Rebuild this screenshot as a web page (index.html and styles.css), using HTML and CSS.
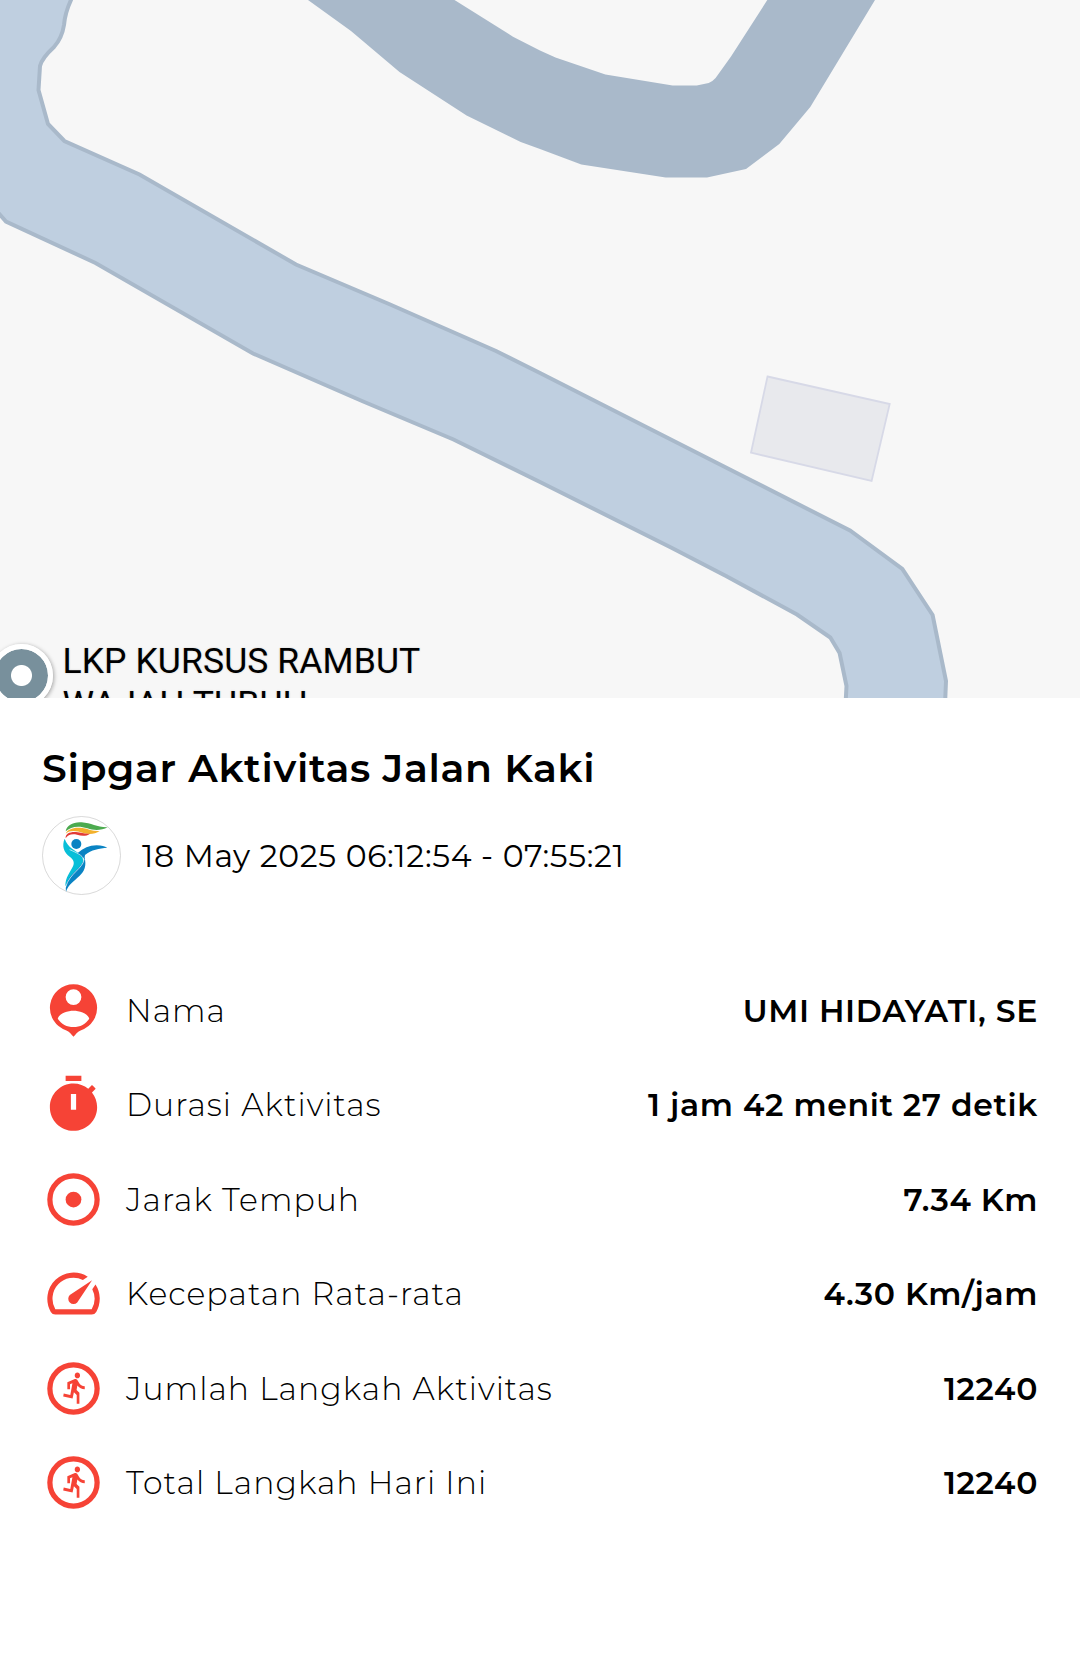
FILE: index.html
```html
<!DOCTYPE html>
<html lang="id">
<head>
  <meta charset="UTF-8" />
  <meta name="viewport" content="width=device-width, initial-scale=1.0" />
  <title>Sipgar Aktivitas Jalan Kaki</title>
  <link rel="stylesheet" href="styles.css">
</head>
<body>
  <section class="map">
    <svg class="map-canvas" viewBox="0 0 1080 698">
      <path class="road-dark" d="M308 0L351 31L399.5 72L466.6 115.5L520.7 142L540 149L581.3 164.5L665.7 177.5H707L746 169L779.3 144L810.3 107L875 0H767.3L731 56.5L715.6 78Q712 82 708.7 83L696.7 85.5H672.6L605.4 74.5L555.5 57.5L540 50.5L513 36.7L454.5 0Z" />
      <path class="road" d="M-5 -5H73L71 0Q65 13 64 25Q62 38 54 47Q42 58 40 66L38.5 90L48 124L64.4 141L139.5 174.5L296 264.5L389 304L496 351L540 373L746.6 478L850 530.5L902.3 569L932.6 615L946 681L945 705H845.5L846.5 686L839.6 653L830.3 637.5L797 614.5L726 576L671 547.5L540 482L453.5 439.5L362 401L253 353.5L95.5 263L6 221.5L-5 209Z" />
      <path class="building" d="M767.5 376.5L889.7 404L871.6 481L751 452.7Z" />
    </svg>
    <div class="pin"></div>
    <p class="place">LKP KURSUS RAMBUT<br>WAJAH TUBUH</p>
  </section>

  <main class="detail">
    <h1>Sipgar Aktivitas Jalan Kaki</h1>

    <div class="tanggal">
      <svg class="logo" viewBox="36 33 237 237">
        <circle cx="154.500" cy="151.500" r="117" fill="#fff" stroke="#c0c0c0" stroke-width="1.800" />
        <path fill="#4caa4f" d="M107 79C110 61 130 50 155 52C184 54 202 68 233 67C214 77 192 77 172 70C147 61 122 64 107 79Z" />
        <path fill="#f3b12c" d="M107 86C112 73 132 65 157 69C177 72 190 80 209 78C196 87 178 90 160 84C139 77 119 75 107 86Z" />
        <path fill="#e23b35" d="M107 100C106 86 119 80 138 81C156 82 164 88 180 86C169 94 155 94 141 89C125 85 114 89 107 100Z" />
        <circle cx="139" cy="117" r="15" fill="#0a83c3" />
        <path fill="#08bfd8" d="M104 101C95 122 101 142 119 155C131 164 134 172 129 184C120 203 106 216 106 244C116 226 132 213 147 197C160 182 166 164 150 148C134 134 113 128 104 101Z" />
        <path fill="#0a83c3" d="M142 145C161 129 177 121 200 121C215 121 224 125 232 128C208 131 184 133 165 150L163 163Z" />
        <path fill="#0a83c3" d="M163 156C171 182 163 199 149 212C131 230 115 238 108 260C105 234 117 217 133 201C147 188 160 177 163 156Z" />
        <path fill="none" stroke="#fff" stroke-width="2" d="M119 134C140 143 157 151 162 163C160 190 119 204 107 246" />
      </svg>
      <span>18 May 2025 06:12:54 - 07:55:21</span>
    </div>

    <ul class="list">
      <li>
        <svg class="icon" viewBox="0 0 24 24"><path fill-rule="evenodd" d="M12 2a9 9 0 0 0-2.700 17.580C10.300 20 11.200 21 12 22c.8-1 1.700-2 2.700-2.420A9 9 0 0 0 12 2zm0 1.900a3 3 0 1 1 0 6 3 3 0 0 1 0-6zM6 15.100C6.600 13 9.800 12.100 12 12.100s5.400.9 6 3c-1.300 2-3.500 3.200-6 3.200s-4.700-1.200-6-3.200z" /></svg>
        <span class="label">Nama</span>
        <span class="value">UMI HIDAYATI, SE</span>
      </li>
      <li>
        <svg class="icon" viewBox="0 0 24 24"><path d="M15 1H9v2h6V1zm-4 13h2V8h-2v6zm8.030-6.610l1.420-1.420c-.43-.51-.9-.99-1.410-1.410l-1.420 1.420C16.070 4.740 14.120 4 12 4c-4.970 0-9 4.030-9 9s4.020 9 9 9 9-4.030 9-9c0-2.120-.74-4.070-1.970-5.610z" fill-rule="evenodd" /></svg>
        <span class="label">Durasi Aktivitas</span>
        <span class="value">1 jam 42 menit 27 detik</span>
      </li>
      <li>
        <svg class="icon" viewBox="0 0 24 24"><circle class="ring" cx="12" cy="12" r="9" /><circle cx="12" cy="12" r="3" /></svg>
        <span class="label">Jarak Tempuh</span>
        <span class="value">7.34 Km</span>
      </li>
      <li>
        <svg class="icon" viewBox="0 0 24 24"><path d="M20.380 8.570l-1.230 1.850a8 8 0 0 1-.22 7.580H5.070A8 8 0 0 1 15.580 6.850l1.850-1.230A10 10 0 0 0 3.350 19a2 2 0 0 0 1.720 1h13.850a2 2 0 0 0 1.740-1 10 10 0 0 0-.27-10.440zm-9.790 6.840a2 2 0 0 0 2.830 0l5.660-8.490-8.490 5.660a2 2 0 0 0 0 2.830z" /></svg>
        <span class="label">Kecepatan Rata-rata</span>
        <span class="value">4.30 Km/jam</span>
      </li>
      <li>
        <svg class="icon" viewBox="0 0 24 24"><circle class="ring" cx="12" cy="12" r="9" /><path transform="matrix(.51 0 0 .555 6.600 5.070)" d="M13.490 5.480c1.100 0 2-.9 2-2s-.9-2-2-2-2 .9-2 2 .9 2 2 2zm-3.600 13.900l1-4.400 2.100 2v6h2v-7.500l-2.100-2 .6-3c1.300 1.500 3.300 2.500 5.500 2.500v-2c-1.900 0-3.500-1-4.300-2.400l-1-1.600c-.4-.6-1-1-1.700-1-.3 0-.5.1-.8.1l-5.200 2.200v4.700h2v-3.400l1.800-.7-1.600 8.100-4.900-1-.4 2 7 1.400z" /></svg>
        <span class="label">Jumlah Langkah Aktivitas</span>
        <span class="value">12240</span>
      </li>
      <li>
        <svg class="icon" viewBox="0 0 24 24"><circle class="ring" cx="12" cy="12" r="9" /><path transform="matrix(.51 0 0 .555 6.600 5.070)" d="M13.490 5.480c1.100 0 2-.9 2-2s-.9-2-2-2-2 .9-2 2 .9 2 2 2zm-3.600 13.900l1-4.400 2.100 2v6h2v-7.500l-2.100-2 .6-3c1.300 1.500 3.300 2.500 5.500 2.500v-2c-1.900 0-3.500-1-4.300-2.400l-1-1.600c-.4-.6-1-1-1.700-1-.3 0-.5.1-.8.1l-5.200 2.200v4.700h2v-3.400l1.800-.7-1.600 8.100-4.900-1-.4 2 7 1.400z" /></svg>
        <span class="label">Total Langkah Hari Ini</span>
        <span class="value">12240</span>
      </li>
    </ul>
  </main>
</body>
</html>
```

FILE: styles.css
```css
* {
  margin: 0;
  padding: 0;
  box-sizing: border-box;
}

body {
  font-family: Montserrat, Inter, sans-serif;
  font-size: 31.5px;
  letter-spacing: 0.656px;
  background: #fff;
  color: #000;
}

.map {
  position: relative;
  height: 698px;
  background: #f7f7f7;
  overflow: hidden;
}

.map-canvas {
  display: block;
  width: 100%;
  height: 698px;
}

.road-dark {
  fill: #a9b9ca;
}

.road {
  fill: #bfcfe0;
  stroke: #a9b9ca;
  stroke-width: 4;
}

.building {
  fill: #e8e9ed;
  stroke: #d7d9e7;
  stroke-width: 1.8;
}

/* place marker and its label float over the map */
.pin {
  position: absolute;
  left: -10px;
  top: 644px;
  width: 63px;
  height: 63px;
  border: 5px solid #fff;
  border-radius: 50%;
  background: radial-gradient(circle, #fff 10px, #78909c 11px);
  background-origin: border-box;
  background-clip: padding-box;
  box-shadow: 1px 1px 4px rgba(0, 0, 0, 0.35);
}

.place {
  position: absolute;
  left: 62.5px;
  top: 640px;
  font-family: Roboto, sans-serif;
  font-size: 35.5px;
  line-height: 43px;
  letter-spacing: 0.1px;
  white-space: nowrap;
  text-shadow: 0 0 2px #ddd, 0 0 2px #ddd;
}

.detail {
  padding: 46px 42px 0;
}

h1 {
  font-size: 39.375px;
  font-weight: 600;
  line-height: 48px;
}

.tanggal {
  display: flex;
  align-items: center;
  gap: 21px;
  margin-top: 24px;
}

.logo {
  width: 79px;
  height: 79px;
}

.list {
  list-style: none;
  margin-top: 83.8px;
}

.list li {
  display: flex;
  align-items: center;
  height: 63px;
  margin-bottom: 31.5px;
}

.icon {
  width: 63px;
  height: 63px;
  margin-right: 21px;
  fill: #f64336;
}

.ring {
  fill: none;
  stroke: #f64336;
  stroke-width: 2;
}

.label,
.value {
  padding-top: 0.8px;
}

.label {
  flex: 1;
  font-weight: 300;
  letter-spacing: 1.03px;
}

.value {
  font-weight: 600;
}
```
